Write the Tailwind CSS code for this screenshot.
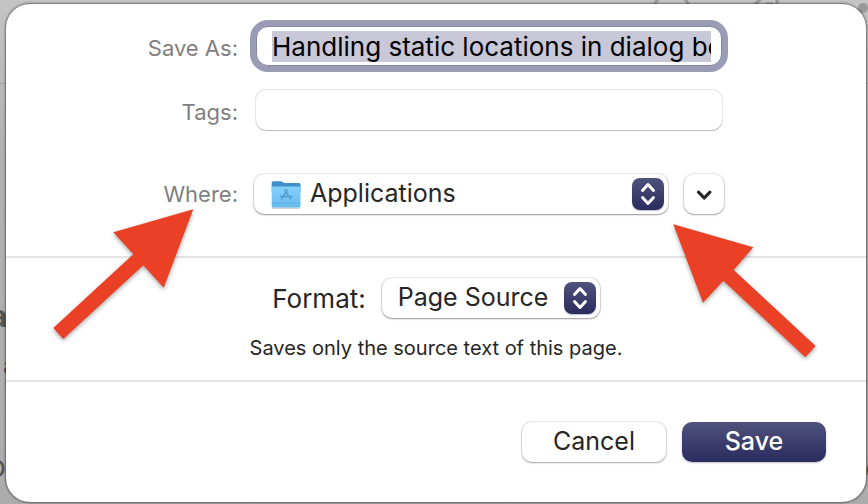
<!DOCTYPE html>
<html lang="en">
<head>
<meta charset="utf-8">
<title>Save dialog</title>
<script src="https://cdn.jsdelivr.net/npm/@tailwindcss/browser@4"></script>
</head>
<body class="relative min-h-screen overflow-hidden bg-linear-to-b from-[#c4c4c4] via-[#b2b2b2] via-30% to-[#acacac] pt-1 pr-0.5 pb-0.5 pl-1.5 font-[Inter,'Liberation_Sans',sans-serif] text-[#262626]">
  <!-- Page behind the sheet -->
  <div aria-hidden="true" class="absolute inset-0 overflow-hidden text-[#555]">
    <div class="absolute top-[83px] right-0 left-0 h-px bg-[#a3a3a3]"></div>
    <span class="absolute top-[298px] -left-2.5 text-3xl font-bold">a</span>
    <span class="absolute top-[350px] left-[3px] text-2xl">a</span>
    <span class="absolute top-[448px] -left-3 text-3xl">o</span>
    <span class="absolute top-[295px] -right-4 text-2xl font-bold">F</span>
    <span class="absolute top-[450px] -right-4 text-3xl font-bold">o</span>
    <svg class="absolute top-0 right-0 h-10 w-56" viewBox="0 0 224 40" fill="none" stroke="#999" stroke-width="3">
      <path d="M10 6Q12 1 15-2M45 6Q43 1 40-2M110 5l8-7M133 5V0M122 4l7 0"/>
      <circle cx="219" cy="8" r="5" fill="#999" stroke="none"/>
    </svg>
  </div>

  <form class="relative rounded-3xl bg-white shadow-[0_0_2px_1px_rgba(0,0,0,0.45)]">
    <section class="grid grid-cols-[232px_minmax(0,1fr)] items-center gap-x-4 border-b-2 border-[#e4e4e4] pt-[22px] pr-[142px] pb-[42px]">
      <label for="name" class="pt-1 text-right text-[22px] leading-7 text-[#7f7f7f]">Save As:</label>
      <input id="name" type="text" autofocus value="Handling static locations in dialog boxes" class="mx-0.5 h-10 min-w-0 rounded-xl border border-[#85869f] bg-white pr-2.5 pl-[15px] text-[26px] leading-8 text-black shadow-[0_0_0_6px_#9a9bb5] outline-none selection:bg-[#c8c8d8] selection:text-black">

      <label for="tags" class="mt-6 pt-1 text-right text-[22px] leading-7 text-[#7f7f7f]">Tags:</label>
      <input id="tags" type="text" class="mx-0.5 mt-6 h-10 min-w-0 rounded-[10px] bg-white px-4 text-[25px] shadow-[0_1px_0_0_#bdbdbd,0_0_0_1px_#e6e6e6] outline-none">

      <label for="where" class="mt-11 text-right text-[22px] leading-7 text-[#7f7f7f]">Where:</label>
      <div class="mt-11 flex gap-4">
        <div class="relative min-w-0 grow">
          <select id="where" class="block h-10 w-full appearance-none rounded-[10px] bg-white pb-0.5 pl-14 text-[25px] leading-8 shadow-[0_0_0_1px_rgba(0,0,0,0.09),0_1px_2px_0_rgba(0,0,0,0.35)] outline-none">
            <option>Applications</option>
          </select>
          <svg aria-hidden="true" class="pointer-events-none absolute top-1.5 left-4 h-[30px] w-8" viewBox="0 0 32 30">
            <defs>
              <linearGradient id="folder" x1="0" y1="0" x2="0" y2="1"><stop stop-color="#83d0f9"/><stop offset="1" stop-color="#69bbef"/></linearGradient>
            </defs>
            <path d="M2.500 27.500h27.500v1.200H2.500z" fill="#000" opacity=".25"/>
            <path d="M1.700 2.800q0-1.600 1.600-1.600h7.400q1 0 1.700.600l1 .8q.6.400 1.400.400h14q1.700 0 1.700 1.700V12H1.700z" fill="#3f8fc8"/>
            <path d="M1.700 8q0-1.400 1.400-1.400h26q1.400 0 1.400 1.400v18.200q0 1.400-1.400 1.400H3.100q-1.400 0-1.400-1.400z" fill="url(#folder)"/>
            <path d="M1.700 23h28.800" stroke="#58abe0" stroke-width=".8"/>
            <path d="M14.800 9.800l1.300 2 1.300-2M16.100 11.800l-4.600 7.400M16.100 11.800l4.600 7.400M10 16.500h7.500M20 16.500h2.300" fill="none" stroke="#4e9dd0" stroke-width="1.300" stroke-linecap="round"/>
          </svg>
          <span aria-hidden="true" class="pointer-events-none absolute top-1 right-1 block size-8 rounded-lg bg-linear-to-b from-[#50527d] to-[#2b2b5e] shadow-[0_1px_1px_rgba(43,43,94,0.3)]">
            <svg class="size-8" viewBox="0 0 32 32" fill="none" stroke="#fff" stroke-width="3" stroke-linecap="round" stroke-linejoin="round"><path d="M10.500 12.500L16 6.500l5.500 6M10.500 19.500l5.500 6 5.500-6"/></svg>
          </span>
        </div>
        <button type="button" aria-label="Show more locations" class="size-10 shrink-0 rounded-[10px] bg-white shadow-[0_0_0_1px_rgba(0,0,0,0.09),0_1px_2px_0_rgba(0,0,0,0.3)]">
          <svg class="size-10" viewBox="0 0 40 40" fill="none" stroke="#262626" stroke-width="3.200" stroke-linecap="round" stroke-linejoin="round"><path d="M14.500 18.200l5.700 5.800 5.700-5.800"/></svg>
        </button>
      </div>
    </section>

    <section class="border-b-2 border-[#e4e4e4] px-4 pt-5 pb-[18px]">
      <div class="flex items-center justify-center gap-4">
        <label for="format" class="pt-0.5 text-[26px] leading-8">Format:</label>
        <div class="relative">
          <select id="format" class="block h-10 w-[218px] appearance-none rounded-[10px] bg-white pb-0.5 pl-4 text-[25px] leading-8 shadow-[0_0_0_1px_rgba(0,0,0,0.09),0_1px_2px_0_rgba(0,0,0,0.35)] outline-none">
            <option>Page Source</option>
          </select>
          <span aria-hidden="true" class="pointer-events-none absolute top-1 right-1 block size-8 rounded-lg bg-linear-to-b from-[#50527d] to-[#2b2b5e] shadow-[0_1px_1px_rgba(43,43,94,0.3)]">
            <svg class="size-8" viewBox="0 0 32 32" fill="none" stroke="#fff" stroke-width="3" stroke-linecap="round" stroke-linejoin="round"><path d="M10.500 12.500L16 6.500l5.500 6M10.500 19.500l5.500 6 5.500-6"/></svg>
          </span>
        </div>
      </div>
      <p class="mt-4 text-center text-[20px] leading-7">Saves only the source text of this page.</p>
    </section>

    <footer class="flex justify-end gap-4 p-10">
      <button type="button" class="h-10 w-36 rounded-[10px] bg-white pb-0.5 text-[25px] leading-8 shadow-[0_0_0_1px_rgba(0,0,0,0.09),0_1px_2px_0_rgba(0,0,0,0.3)]">Cancel</button>
      <button type="submit" class="h-10 w-36 rounded-[10px] bg-linear-to-b from-[#50527d] to-[#2b2b5e] pb-0.5 text-[25px] leading-8 font-medium text-white shadow-[0_1px_2px_rgba(43,43,94,0.3)]">Save</button>
    </footer>

    <!-- Pointer arrows over the sheet -->
    <svg aria-hidden="true" class="pointer-events-none absolute top-[196px] left-10 h-36 w-40 drop-shadow-[0_2px_2px_rgba(0,0,0,0.35)]" viewBox="46 200 160 144"><path fill="#ea4126" d="M193.300 209.300L113.300 232.300l20 22L53.300 328l10 11 80-73.700 20.400 22.400z"/></svg>
    <svg aria-hidden="true" class="pointer-events-none absolute top-[212px] right-10 h-40 w-40 drop-shadow-[0_2px_2px_rgba(0,0,0,0.35)]" viewBox="666 216 160 160"><path fill="#ea4126" d="M673.300 224.300L753.300 247.300l-19.600 22.700 82 76-10.400 11.300-82-76.600-20.300 22z"/></svg>
  </form>
  <script>
    const nameField = document.getElementById('name');
    nameField.focus();
    nameField.select();
    nameField.scrollLeft = 0;
  </script>
</body>
</html>
